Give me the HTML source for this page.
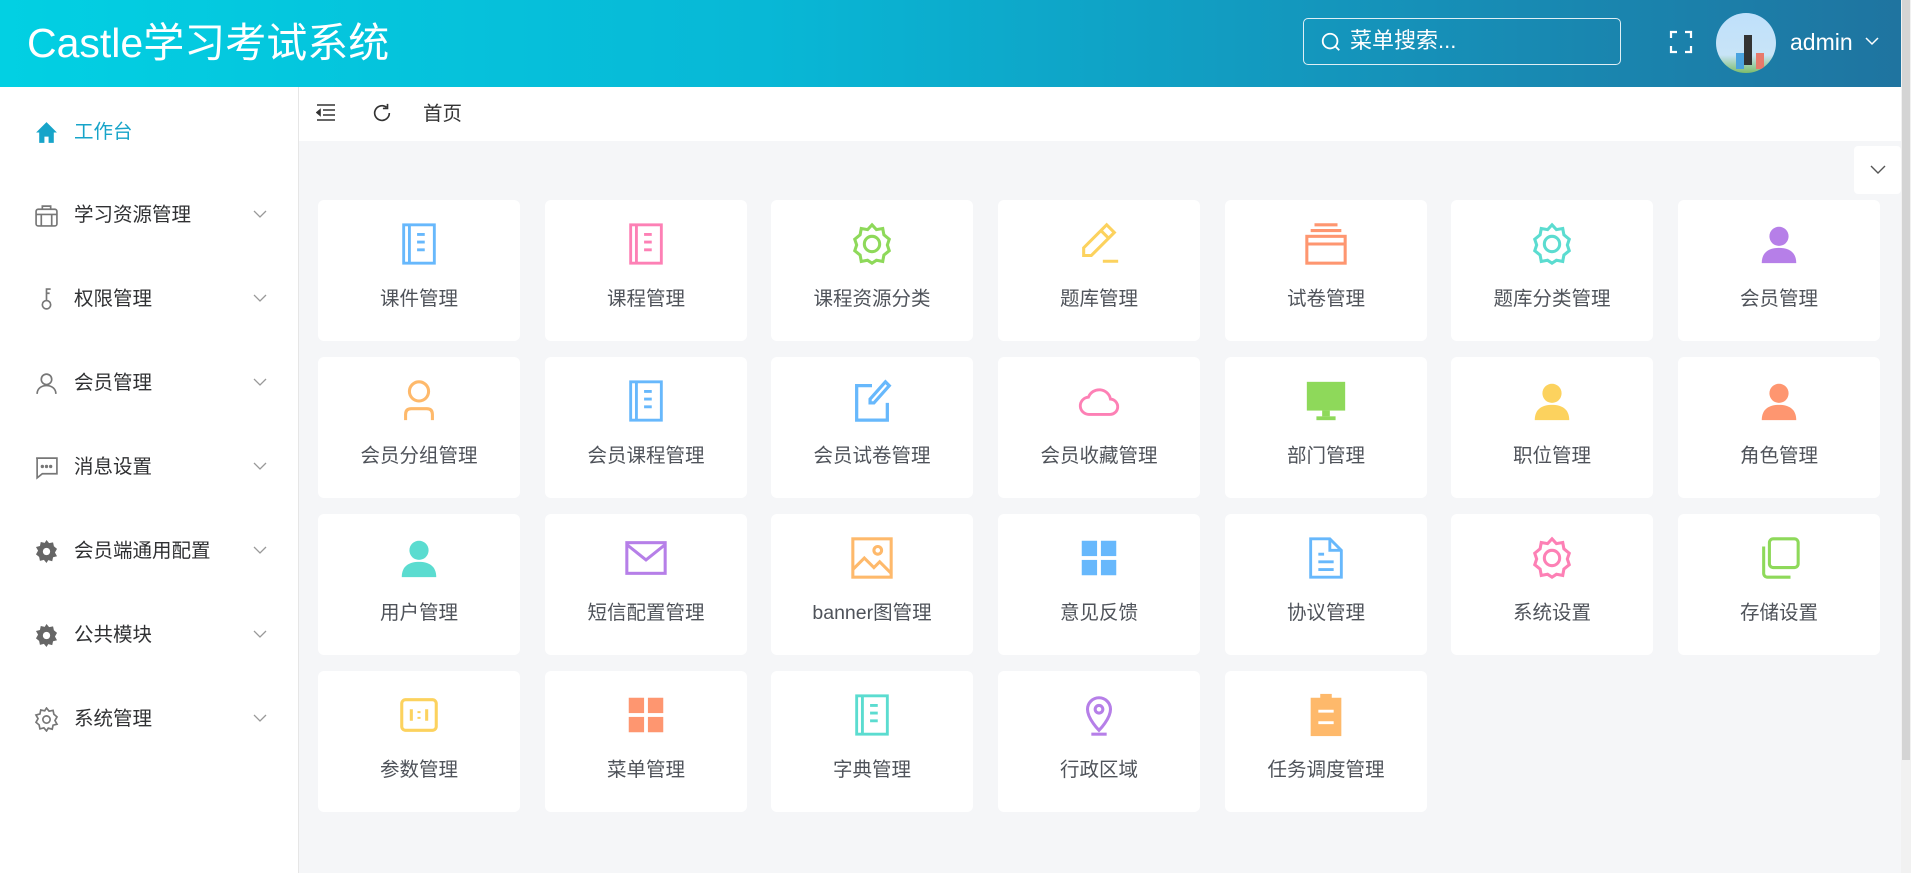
<!DOCTYPE html>
<html><head><meta charset="utf-8"><style>
*{margin:0;padding:0;box-sizing:border-box}
body{width:1911px;height:873px;overflow:hidden;background:#f5f6f8;font-family:"Liberation Sans","Noto Sans CJK SC",sans-serif;position:relative}
.hdr{position:absolute;left:0;top:0;width:1901px;height:87px;background:linear-gradient(90deg,#02d0e3 0%,#08b8d6 40%,#1690b8 75%,#1f74a0 100%)}
.title{position:absolute;left:27px;top:18px;color:#fff;font-size:41px;line-height:50px}
.search{position:absolute;left:1303px;top:18px;width:318px;height:47px;border:1.5px solid #dfeff5;border-radius:5px;color:#fff;font-size:22px;line-height:44px;padding-left:46px}
.sb{position:absolute;left:0;top:87px;width:299px;height:786px;background:#fff;border-right:1px solid #e6e6e6}
.mi{position:absolute;left:74px;font-size:19.5px;color:#303133;line-height:24px}
.mic{position:absolute;left:34px;width:25px;height:25px}
.chev{position:absolute;left:253px;width:14px;height:10px}
.tabs{position:absolute;left:299px;top:87px;width:1602px;height:54px;background:#fff}
.card{position:absolute;width:202px;height:141px;background:#fff;border-radius:6px}
.card svg{position:absolute;left:78px;top:21px;width:46px;height:46px}
.card span{position:absolute;left:0;right:0;top:86px;text-align:center;font-size:19.5px;color:#4f535a;line-height:26px}
.scroll{position:absolute;left:1901px;top:0;width:10px;height:873px;background:#f1f1f1}
.scroll div{position:absolute;left:1px;top:0;width:8px;height:760px;background:#d4d4d4}
</style></head><body>
<div class="hdr">
<div class="title">Castle学习考试系统</div>
<div class="search"><svg style="position:absolute;left:16px;top:12px" width="22" height="22" viewBox="0 0 24 24" fill="none" stroke="#fff" stroke-width="2"><circle cx="11" cy="11" r="8"/><path d="M17 17l4 4"/></svg>菜单搜索...</div>
<svg style="position:absolute;left:1669px;top:30px" width="24" height="24" viewBox="0 0 24 24" fill="none" stroke="#fff" stroke-width="2.2"><path d="M2 8V2h6M16 2h6v6M22 16v6h-6M8 22H2v-6"/></svg>
<div style="position:absolute;left:1716px;top:13px;width:60px;height:60px;border-radius:50%;background:linear-gradient(180deg,#bfe0fb 0%,#c8e4f7 70%,#7dbd6a 100%);overflow:hidden"><div style="position:absolute;left:28px;top:22px;width:8px;height:30px;background:#333"></div><div style="position:absolute;left:20px;top:40px;width:8px;height:16px;background:#4aa3df"></div><div style="position:absolute;left:40px;top:40px;width:8px;height:16px;background:#e8796b"></div></div>
<div style="position:absolute;left:1790px;top:26px;color:#fff;font-size:23px;line-height:32px">admin</div>
<svg style="position:absolute;left:1865px;top:36px" width="14" height="10" viewBox="0 0 14 10" fill="none" stroke="#fff" stroke-width="1.5"><path d="M1 2l6 6 6-6"/></svg>
</div>
<div class="sb">
<svg class="mic" style="top:33px" viewBox="0 0 24 24"><path d="M12 2L2 12h3v10h5v-6h4v6h5V12h3z" fill="#17a4c9"/></svg>
<div class="mi" style="top:33px;color:#17a4c9">工作台</div>
<svg class="mic" style="top:116px" viewBox="0 0 24 24" fill="none" stroke="#777" stroke-width="1.6"><rect x="2" y="6" width="20" height="16" rx="2"/><path d="M8 6V3h8v3M2 11h20M7 11v11M17 11v11"/></svg>
<div class="mi" style="top:116px">学习资源管理</div>
<svg class="mic" style="top:200px" viewBox="0 0 24 24" fill="none" stroke="#777" stroke-width="1.6"><circle cx="12" cy="17" r="4"/><path d="M12 13V2h4M12 6h3"/></svg>
<div class="mi" style="top:200px">权限管理</div>
<svg class="mic" style="top:284px" viewBox="0 0 24 24" fill="none" stroke="#777" stroke-width="1.6"><circle cx="12" cy="8" r="5"/><path d="M3 22c0-5 4-8 9-8s9 3 9 8"/></svg>
<div class="mi" style="top:284px">会员管理</div>
<svg class="mic" style="top:368px" viewBox="0 0 24 24" fill="none" stroke="#777" stroke-width="1.6"><path d="M2 3h20v15H8l-5 4V3z"/><circle cx="8" cy="11" r=".8" fill="#777"/><circle cx="12" cy="11" r=".8" fill="#777"/><circle cx="16" cy="11" r=".8" fill="#777"/></svg>
<div class="mi" style="top:368px">消息设置</div>
<svg class="mic" style="top:452px" viewBox="0 0 24 24"><path d="M12 1l2.5 3 3.8-.8.8 3.8 3 2.5-2 3.5 2 3.5-3.8 1-.8 3.8-3.8-1L12 23l-2.5-3-3.8 1-.8-3.8-3-2.5 2-3.5-2-3.5 3.8-1 .8-3.8 3.8.8z" fill="#666"/><circle cx="12" cy="12" r="3.5" fill="#fff"/></svg>
<div class="mi" style="top:452px">会员端通用配置</div>
<svg class="mic" style="top:536px" viewBox="0 0 24 24"><path d="M12 1l2.5 3 3.8-.8.8 3.8 3 2.5-2 3.5 2 3.5-3.8 1-.8 3.8-3.8-1L12 23l-2.5-3-3.8 1-.8-3.8-3-2.5 2-3.5-2-3.5 3.8-1 .8-3.8 3.8.8z" fill="#666"/><circle cx="12" cy="12" r="3.5" fill="#fff"/></svg>
<div class="mi" style="top:536px">公共模块</div>
<svg class="mic" style="top:620px" viewBox="0 0 24 24" fill="none" stroke="#777" stroke-width="1.6"><path d="M12 1l2.5 3 3.8-.8.8 3.8 3 2.5-2 3.5 2 3.5-3.8 1-.8 3.8-3.8-1L12 23l-2.5-3-3.8 1-.8-3.8-3-2.5 2-3.5-2-3.5 3.8-1 .8-3.8 3.8.8z"/><circle cx="12" cy="12" r="3.5"/></svg>
<div class="mi" style="top:620px">系统管理</div>
<svg class="chev" style="top:122px" viewBox="0 0 14 10" fill="none" stroke="#999" stroke-width="1.3"><path d="M1 2l6 6 6-6"/></svg>
<svg class="chev" style="top:206px" viewBox="0 0 14 10" fill="none" stroke="#999" stroke-width="1.3"><path d="M1 2l6 6 6-6"/></svg>
<svg class="chev" style="top:290px" viewBox="0 0 14 10" fill="none" stroke="#999" stroke-width="1.3"><path d="M1 2l6 6 6-6"/></svg>
<svg class="chev" style="top:374px" viewBox="0 0 14 10" fill="none" stroke="#999" stroke-width="1.3"><path d="M1 2l6 6 6-6"/></svg>
<svg class="chev" style="top:458px" viewBox="0 0 14 10" fill="none" stroke="#999" stroke-width="1.3"><path d="M1 2l6 6 6-6"/></svg>
<svg class="chev" style="top:542px" viewBox="0 0 14 10" fill="none" stroke="#999" stroke-width="1.3"><path d="M1 2l6 6 6-6"/></svg>
<svg class="chev" style="top:626px" viewBox="0 0 14 10" fill="none" stroke="#999" stroke-width="1.3"><path d="M1 2l6 6 6-6"/></svg>
</div>
<div class="tabs">
<svg style="position:absolute;left:17px;top:16px" width="20" height="20" viewBox="0 0 20 20" fill="none" stroke="#333" stroke-width="1.6"><path d="M1 2h18M7 7h12M7 12h12M1 17h18"/><path d="M4 7L1 9.5 4 12z" fill="#333"/></svg>
<svg style="position:absolute;left:72px;top:15px" width="22" height="22" viewBox="0 0 24 24" fill="none" stroke="#333" stroke-width="1.8"><path d="M20 12a8 8 0 1 1-3-6.2"/><path d="M18 2v5h-5"/></svg>
<div style="position:absolute;left:124px;top:14px;font-size:19.5px;color:#333;line-height:26px">首页</div>
</div>
<div style="position:absolute;left:1854px;top:146px;width:47px;height:48px;background:#fff;border-radius:4px"><svg style="position:absolute;left:16px;top:19px" width="16" height="10" viewBox="0 0 16 10" fill="none" stroke="#555" stroke-width="1.4"><path d="M1 1l7 7 7-7"/></svg></div>
<div class="scroll"><div></div></div>

<div class="card" style="left:318px;top:200px"><svg viewBox="0 0 24 24" fill="none" stroke="#67b8fc" stroke-width="1.5"><rect x="4" y="2" width="16" height="20"/><path d="M7 2v20M11 7h4M11 11h4M11 15h4"/></svg><span>课件管理</span></div>
<div class="card" style="left:545px;top:200px"><svg viewBox="0 0 24 24" fill="none" stroke="#fd80b5" stroke-width="1.5"><rect x="4" y="2" width="16" height="20"/><path d="M7 2v20M11 7h4M11 11h4M11 15h4"/></svg><span>课程管理</span></div>
<div class="card" style="left:771px;top:200px"><svg viewBox="0 0 24 24" fill="none" stroke="#8ed95a" stroke-width="1.6"><path d="M12 2l2.3 2.5 3.3-.6.6 3.3L21 9.5 20 12.5l1 3-2.8 2.3-.6 3.3-3.3-.6L12 22l-2.3-1.5-3.3.6-.6-3.3L3 15.5l1-3-1-3 2.8-2.3.6-3.3 3.3.6z"/><circle cx="12" cy="12" r="4"/></svg><span>课程资源分类</span></div>
<div class="card" style="left:998px;top:200px"><svg viewBox="0 0 24 24" fill="none" stroke="#fcd25e" stroke-width="1.6"><path d="M16 2l4 4L8 18H4v-4z"/><path d="M13 5l4 4M14 21h8"/></svg><span>题库管理</span></div>
<div class="card" style="left:1225px;top:200px"><svg viewBox="0 0 24 24" fill="none" stroke="#fe9670" stroke-width="1.6"><path d="M6 2h12M4 5h16"/><rect x="2" y="8" width="20" height="14"/><path d="M2 12h20"/></svg><span>试卷管理</span></div>
<div class="card" style="left:1451px;top:200px"><svg viewBox="0 0 24 24" fill="none" stroke="#5bdcd0" stroke-width="1.6"><path d="M12 2l2.3 2.5 3.3-.6.6 3.3L21 9.5 20 12.5l1 3-2.8 2.3-.6 3.3-3.3-.6L12 22l-2.3-1.5-3.3.6-.6-3.3L3 15.5l1-3-1-3 2.8-2.3.6-3.3 3.3.6z"/><circle cx="12" cy="12" r="4"/></svg><span>题库分类管理</span></div>
<div class="card" style="left:1678px;top:200px"><svg viewBox="0 0 24 24" fill="#b67fe8"><circle cx="12" cy="8" r="5"/><path d="M3 22c0-6 4-8 9-8s9 2 9 8z"/></svg><span>会员管理</span></div>
<div class="card" style="left:318px;top:357px"><svg viewBox="0 0 24 24" fill="none" stroke="#feb96b" stroke-width="1.6"><circle cx="12" cy="7" r="5"/><path d="M5 22v-3c0-2 1-3 3-3h8c2 0 3 1 3 3v3"/></svg><span>会员分组管理</span></div>
<div class="card" style="left:545px;top:357px"><svg viewBox="0 0 24 24" fill="none" stroke="#67b8fc" stroke-width="1.5"><rect x="4" y="2" width="16" height="20"/><path d="M7 2v20M11 7h4M11 11h4M11 15h4"/></svg><span>会员课程管理</span></div>
<div class="card" style="left:771px;top:357px"><svg viewBox="0 0 24 24" fill="none" stroke="#67b8fc" stroke-width="1.7"><path d="M12 4H4v18h16v-9"/><path d="M19 2l2 2-8 9h-2v-2z"/></svg><span>会员试卷管理</span></div>
<div class="card" style="left:998px;top:357px"><svg viewBox="0 0 24 24" fill="none" stroke="#fd80b5" stroke-width="1.5"><path d="M7 19a4.5 4.5 0 0 1-.5-9 6 6 0 0 1 11.5 1 4 4 0 0 1-.5 8z"/></svg><span>会员收藏管理</span></div>
<div class="card" style="left:1225px;top:357px"><svg viewBox="0 0 24 24" fill="#8ed95a"><rect x="2" y="2" width="20" height="15"/><rect x="10" y="17" width="4" height="3"/><rect x="7" y="20" width="10" height="2"/></svg><span>部门管理</span></div>
<div class="card" style="left:1451px;top:357px"><svg viewBox="0 0 24 24" fill="#fcd25e"><circle cx="12" cy="8" r="5"/><path d="M3 22c0-6 4-8 9-8s9 2 9 8z"/></svg><span>职位管理</span></div>
<div class="card" style="left:1678px;top:357px"><svg viewBox="0 0 24 24" fill="#fe9670"><circle cx="12" cy="8" r="5"/><path d="M3 22c0-6 4-8 9-8s9 2 9 8z"/></svg><span>角色管理</span></div>
<div class="card" style="left:318px;top:514px"><svg viewBox="0 0 24 24" fill="#5bdcd0"><circle cx="12" cy="8" r="5"/><path d="M3 22c0-6 4-8 9-8s9 2 9 8z"/></svg><span>用户管理</span></div>
<div class="card" style="left:545px;top:514px"><svg viewBox="0 0 24 24" fill="none" stroke="#b67fe8" stroke-width="1.6"><rect x="2" y="4" width="20" height="16"/><path d="M2 5l10 8 10-8"/></svg><span>短信配置管理</span></div>
<div class="card" style="left:771px;top:514px"><svg viewBox="0 0 24 24" fill="none" stroke="#feb96b" stroke-width="1.6"><rect x="2" y="2" width="20" height="20"/><circle cx="15" cy="8" r="2"/><path d="M2 18l6-6 5 5 3-3 6 6"/></svg><span>banner图管理</span></div>
<div class="card" style="left:998px;top:514px"><svg viewBox="0 0 24 24" fill="#67b8fc"><rect x="3" y="3" width="8" height="8"/><rect x="13" y="3" width="8" height="8"/><rect x="3" y="13" width="8" height="8"/><rect x="13" y="13" width="8" height="8"/></svg><span>意见反馈</span></div>
<div class="card" style="left:1225px;top:514px"><svg viewBox="0 0 24 24" fill="none" stroke="#67b8fc" stroke-width="1.5"><path d="M4 2h10l6 6v14H4z"/><path d="M14 2v6h6M8 10h3M8 14h8M8 18h8"/></svg><span>协议管理</span></div>
<div class="card" style="left:1451px;top:514px"><svg viewBox="0 0 24 24" fill="none" stroke="#fd80b5" stroke-width="1.6"><path d="M12 2l2.3 2.5 3.3-.6.6 3.3L21 9.5 20 12.5l1 3-2.8 2.3-.6 3.3-3.3-.6L12 22l-2.3-1.5-3.3.6-.6-3.3L3 15.5l1-3-1-3 2.8-2.3.6-3.3 3.3.6z"/><circle cx="12" cy="12" r="4"/></svg><span>系统设置</span></div>
<div class="card" style="left:1678px;top:514px"><svg viewBox="0 0 24 24" fill="none" stroke="#8ed95a" stroke-width="1.6"><rect x="7" y="2" width="15" height="15" rx="2"/><path d="M4 6v14a2 2 0 0 0 2 2h12"/></svg><span>存储设置</span></div>
<div class="card" style="left:318px;top:671px"><svg viewBox="0 0 24 24" fill="none" stroke="#fcd25e" stroke-width="1.6"><rect x="3" y="4" width="18" height="16" rx="2"/><path d="M8 9v6M16 9v6M12 10v1M12 13v1"/></svg><span>参数管理</span></div>
<div class="card" style="left:545px;top:671px"><svg viewBox="0 0 24 24" fill="#fe9670"><rect x="3" y="3" width="8" height="8"/><rect x="13" y="3" width="8" height="8"/><rect x="3" y="13" width="8" height="8"/><rect x="13" y="13" width="8" height="8"/></svg><span>菜单管理</span></div>
<div class="card" style="left:771px;top:671px"><svg viewBox="0 0 24 24" fill="none" stroke="#5bdcd0" stroke-width="1.5"><rect x="4" y="2" width="16" height="20"/><path d="M7 2v20M11 7h4M11 11h4M11 15h4"/></svg><span>字典管理</span></div>
<div class="card" style="left:998px;top:671px"><svg viewBox="0 0 24 24" fill="none" stroke="#b67fe8" stroke-width="1.6"><path d="M12 20s-6-6-6-11a6 6 0 0 1 12 0c0 5-6 11-6 11z"/><circle cx="12" cy="9" r="2"/><path d="M8 22h8"/></svg><span>行政区域</span></div>
<div class="card" style="left:1225px;top:671px"><svg viewBox="0 0 24 24" fill="#feb96b"><rect x="4" y="3" width="16" height="20"/><rect x="9" y="1" width="6" height="3"/><path d="M8 10h8M8 16h8" stroke="#fff" stroke-width="1.5"/></svg><span>任务调度管理</span></div>
</body></html>
